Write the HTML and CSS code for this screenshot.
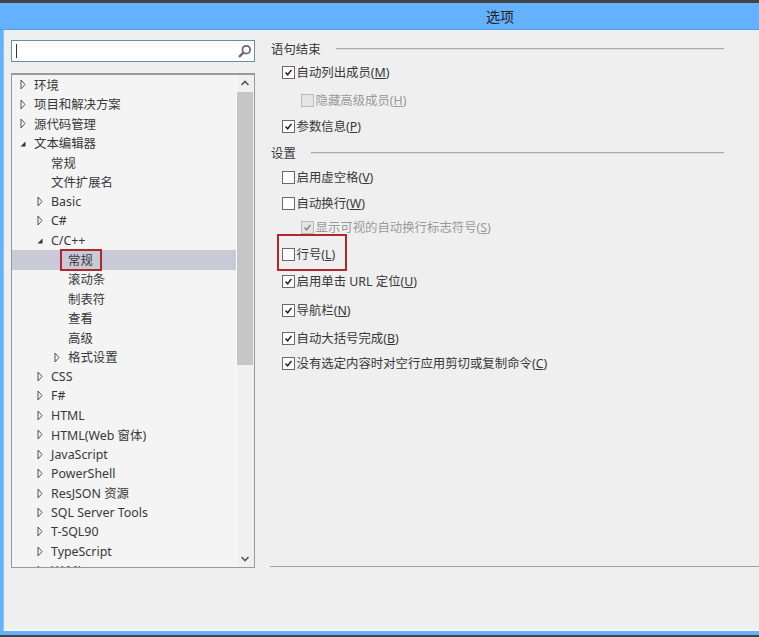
FILE: index.html
```html
<!DOCTYPE html>
<html lang="zh-CN">
<head>
<meta charset="utf-8">
<title>选项</title>
<link rel="stylesheet" href="styles.css">
</head>
<body>
<svg class="defs" width="0" height="0" aria-hidden="true">
  <symbol id="closed" viewBox="0 0 6 11"><path d="M1 1 L5 5.5 L1 10 Z" fill="#f4f4f4" stroke="#555" stroke-width="1"/></symbol>
  <symbol id="open" viewBox="0 0 6 11"><path d="M0.5 8.5 L5.5 8.5 L5.5 3.5 Z" fill="#333"/></symbol>
  <symbol id="tick" viewBox="0 0 13 13"><path d="M3 6.5 L5.5 9.2 L10 3.4" fill="none" stroke="currentColor" stroke-width="1.8"/></symbol>
</svg>
<div class="window">
  <header class="titlebar"><span class="title">选项</span></header>
  <main class="content">
    <aside class="left">
      <div class="search">
        <span class="caret"></span>
        <svg class="search-icon" width="15" height="15" viewBox="0 0 15 15"><circle cx="9.3" cy="5.7" r="3.9" fill="none" stroke="#666" stroke-width="1.7"/><path d="M6.4 8.6 L2 13" stroke="#666" stroke-width="2.4"/></svg>
      </div>
      <div class="tree">
        <div class="tree-rows">
          <div class="row l0"><svg class="arrow"><use href="#closed"/></svg><span>环境</span></div>
          <div class="row l0"><svg class="arrow"><use href="#closed"/></svg><span>项目和解决方案</span></div>
          <div class="row l0"><svg class="arrow"><use href="#closed"/></svg><span>源代码管理</span></div>
          <div class="row l0"><svg class="arrow"><use href="#open"/></svg><span>文本编辑器</span></div>
          <div class="row l1"><i class="arrow"></i><span>常规</span></div>
          <div class="row l1"><i class="arrow"></i><span>文件扩展名</span></div>
          <div class="row l1"><svg class="arrow"><use href="#closed"/></svg><span>Basic</span></div>
          <div class="row l1"><svg class="arrow"><use href="#closed"/></svg><span>C#</span></div>
          <div class="row l1"><svg class="arrow"><use href="#open"/></svg><span>C/C++</span></div>
          <div class="row l2 selected"><i class="arrow"></i><span class="marked">常规</span></div>
          <div class="row l2"><i class="arrow"></i><span>滚动条</span></div>
          <div class="row l2"><i class="arrow"></i><span>制表符</span></div>
          <div class="row l2"><i class="arrow"></i><span>查看</span></div>
          <div class="row l2"><i class="arrow"></i><span>高级</span></div>
          <div class="row l2"><svg class="arrow"><use href="#closed"/></svg><span>格式设置</span></div>
          <div class="row l1"><svg class="arrow"><use href="#closed"/></svg><span>CSS</span></div>
          <div class="row l1"><svg class="arrow"><use href="#closed"/></svg><span>F#</span></div>
          <div class="row l1"><svg class="arrow"><use href="#closed"/></svg><span>HTML</span></div>
          <div class="row l1"><svg class="arrow"><use href="#closed"/></svg><span>HTML(Web 窗体)</span></div>
          <div class="row l1"><svg class="arrow"><use href="#closed"/></svg><span>JavaScript</span></div>
          <div class="row l1"><svg class="arrow"><use href="#closed"/></svg><span>PowerShell</span></div>
          <div class="row l1"><svg class="arrow"><use href="#closed"/></svg><span>ResJSON 资源</span></div>
          <div class="row l1"><svg class="arrow"><use href="#closed"/></svg><span>SQL Server Tools</span></div>
          <div class="row l1"><svg class="arrow"><use href="#closed"/></svg><span>T-SQL90</span></div>
          <div class="row l1"><svg class="arrow"><use href="#closed"/></svg><span>TypeScript</span></div>
          <div class="row l1"><svg class="arrow"><use href="#closed"/></svg><span>XAML</span></div>
        </div>
        <div class="scrollbar">
          <svg class="sb-btn" width="16" height="17" viewBox="0 0 16 17"><path d="M4.5 10 L8 6.5 L11.5 10" fill="none" stroke="#555" stroke-width="1.6"/></svg>
          <div class="thumb"></div>
          <svg class="sb-btn sb-down" width="16" height="17" viewBox="0 0 16 17"><path d="M4.5 7 L8 10.5 L11.5 7" fill="none" stroke="#555" stroke-width="1.6"/></svg>
        </div>
      </div>
    </aside>
    <section class="right">
      <div class="options">
        <div class="heading"><span>语句结束</span><i></i></div>
        <label class="opt"><span class="box on"><svg><use href="#tick"/></svg></span><span>自动列出成员(<u>M</u>)</span></label>
        <label class="opt sub off"><span class="box"></span><span>隐藏高级成员(<u>H</u>)</span></label>
        <label class="opt"><span class="box on"><svg><use href="#tick"/></svg></span><span>参数信息(<u>P</u>)</span></label>
        <div class="heading"><span>设置</span><i></i></div>
        <label class="opt"><span class="box"></span><span>启用虚空格(<u>V</u>)</span></label>
        <label class="opt"><span class="box"></span><span>自动换行(<u>W</u>)</span></label>
        <label class="opt sub off"><span class="box on"><svg><use href="#tick"/></svg></span><span>显示可视的自动换行标志符号(<u>S</u>)</span></label>
        <label class="opt flagged"><span class="box"></span><span>行号(<u>L</u>)</span></label>
        <label class="opt"><span class="box on"><svg><use href="#tick"/></svg></span><span>启用单击 URL 定位(<u>U</u>)</span></label>
        <label class="opt"><span class="box on"><svg><use href="#tick"/></svg></span><span>导航栏(<u>N</u>)</span></label>
        <label class="opt"><span class="box on"><svg><use href="#tick"/></svg></span><span>自动大括号完成(<u>B</u>)</span></label>
        <label class="opt"><span class="box on"><svg><use href="#tick"/></svg></span><span>没有选定内容时对空行应用剪切或复制命令(<u>C</u>)</span></label>
      </div>
      <div class="rule"></div>
    </section>
  </main>
</div>
</body>
</html>
```
FILE: styles.css
```css
* { box-sizing: border-box; }
html, body { margin: 0; height: 100%; }
body {
  width: 759px;
  height: 637px;
  overflow: hidden;
  background: #444;
  padding: 3px 0 2px;
  font-family: "Noto Sans", "Noto Sans CJK SC", sans-serif;
  font-size: 12.4px;
  color: #383838;
}
.defs { position: absolute; }
.window {
  height: 632px;
  display: flex;
  flex-direction: column;
  background: #64b1ff;
  padding: 0 0 4px 3px;
}
.titlebar {
  height: 27px;
  flex: none;
  display: flex;
  align-items: center;
  padding: 0 0 0 486px;
  border-bottom: 1px solid #5b9bd8;
  margin-left: -3px;
}
.title { font-size: 14px; color: #222; font-family: "Noto Sans CJK SC", sans-serif; }
.content {
  flex: 1;
  display: flex;
  background: #efefef;
  padding-top: 10px;
  border-left: 1px solid #8fc0ea;
  box-shadow: inset 0 2px 0 #e8f1f6, inset 0 -2px 0 #f6f6f6;
  min-height: 0;
}
.left { width: 266px; flex: none; padding-left: 7px; }
.search {
  width: 244px;
  height: 22px;
  background: #fff;
  border: 1px solid #5f93a8;
  display: flex;
  align-items: center;
  justify-content: space-between;
  padding: 0 2px 0 4px;
}
.caret { width: 1px; height: 14px; background: #333; }
.search-icon { flex: none; }
.tree {
  width: 244px;
  height: 495px;
  margin-top: 11px;
  border: 1px solid #999;
  border-top-width: 2px;
  display: flex;
  overflow: hidden;
  background: #f4f4f4;
}
.tree-rows { flex: 1; min-width: 0; padding-top: 0.2px; }
.row {
  height: 19.45px;
  display: flex;
  align-items: center;
  padding-left: 8px;
  white-space: nowrap;
}
.row.l1 { padding-left: 25px; }
.row.l2 { padding-left: 42px; }
.arrow { display: block; width: 6px; height: 11px; margin-right: 8px; flex: none; }
.selected { background: #c9c9d8; }
.marked {
  position: relative;
}
.marked::after {
  content: "";
  position: absolute;
  left: -8px;
  right: -9px;
  top: -2px;
  bottom: -2px;
  border: 2px solid #b0282c;
}
.scrollbar {
  width: 18px;
  flex: none;
  display: flex;
  flex-direction: column;
  background: #f0f0f0;
  border-left: 1px solid #fafafa;
  padding-right: 1px;
}
.sb-btn { flex: none; }
.thumb { height: 273px; background: #c6c6c6; }
.sb-down { margin-top: auto; }
.right { flex: 1; min-width: 0; display: flex; flex-direction: column; }
.options {
  display: grid;
  grid-template-rows: 23px 28px 26px 27px 24px 26px 24px 27px 27px 29px 28px 25px 20px;
  align-items: start;
}
.heading { display: flex; align-items: center; height: 18px; padding: 0 35px 0 1px; }
.heading i { flex: 1; height: 2px; margin-left: 15px; background: #aaa; border-bottom: 1px solid #ddd; }
.opt { display: flex; align-items: center; height: 18px; padding-left: 12px; position: relative; }
.opt.sub { padding-left: 31px; }
.opt.off { color: #9a9a9a; }
.box {
  width: 13px;
  height: 13px;
  flex: none;
  margin-right: 1.5px;
  background: #fff;
  border: 1px solid #6a6a6a;
  color: #222;
}
.box svg { display: block; width: 11px; height: 11px; }
.off .box { background: #e4e4e4; border-color: #bbb; color: #888; }
.flagged::after {
  content: "";
  position: absolute;
  left: 7px;
  top: -11px;
  width: 66px;
  height: 33px;
  border: 2px solid #b0282c;
}
.rule { height: 1px; margin-top: auto; margin-bottom: 64px; background: #a0a0a0; }
```
